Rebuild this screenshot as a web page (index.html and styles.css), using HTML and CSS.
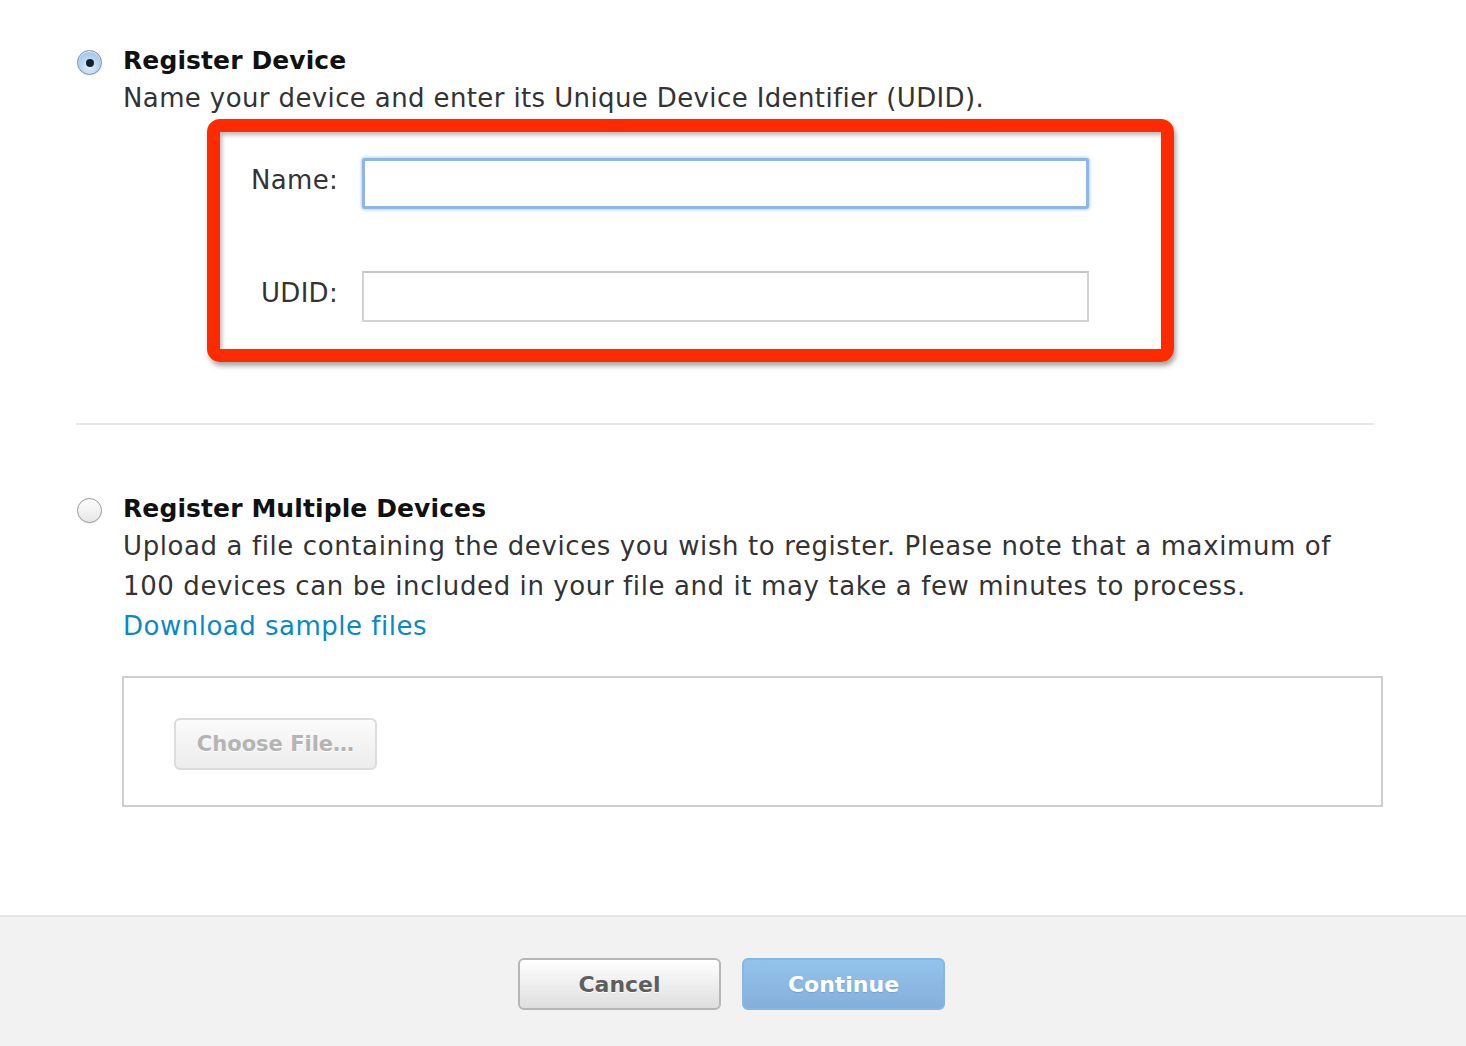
FILE: index.html
```html
<!DOCTYPE html>
<html lang="en">
<head>
<meta charset="utf-8">
<title>Register Device</title>
<link rel="stylesheet" href="styles.css">
</head>
<body>
<div class="page">
  <main class="content">
    <section class="option option-single">
      <span class="radio radio-on"></span>
      <div class="option-body">
        <h2 class="option-title">Register Device</h2>
        <p class="option-desc">Name your device and enter its Unique Device Identifier (UDID).</p>
        <div class="highlight">
          <div class="fields">
            <label class="field-label" for="name">Name:</label>
            <input class="field-input field-focus" id="name" type="text">
            <label class="field-label" for="udid">UDID:</label>
            <input class="field-input" id="udid" type="text">
          </div>
        </div>
      </div>
    </section>

    <hr class="divider">

    <section class="option option-multi">
      <span class="radio"></span>
      <div class="option-body">
        <h2 class="option-title">Register Multiple Devices</h2>
        <p class="option-desc option-desc-wrap">Upload a file containing the devices you wish to register. Please note that a maximum of 100 devices can be included in your file and it may take a few minutes to process.</p>
        <a class="sample-link" href="#">Download sample files</a>
        <div class="file-box">
          <button class="btn btn-file" type="button">Choose File…</button>
        </div>
      </div>
    </section>
  </main>
  <footer class="footer">
    <button class="btn btn-cancel" type="button">Cancel</button>
    <button class="btn btn-continue" type="button">Continue</button>
  </footer>
</div>
</body>
</html>
```

FILE: styles.css
```css
* { box-sizing: border-box; }

html, body {
  margin: 0;
  padding: 0;
  background: #ffffff;
  font-family: "DejaVu Sans", "Liberation Sans", sans-serif;
}

.page {
  height: 1046px;
  display: flex;
  flex-direction: column;
  overflow: hidden;
}

.content {
  flex: 1;
  padding: 43px 0 0 77px;
}

.option {
  display: grid;
  grid-template-columns: 25px 1260px;
  column-gap: 21px;
  align-items: start;
}

.radio {
  display: block;
  width: 25px;
  height: 25px;
  margin-top: 7px;
  border-radius: 50%;
  border: 1px solid #9a9a9a;
  background: linear-gradient(#ffffff, #e6e6e6);
  box-shadow: inset 0 1px 1px rgba(255,255,255,0.9), 0 1px 1px rgba(0,0,0,0.08);
  position: relative;
}

.radio-on {
  border-color: #7f93ab;
  background: radial-gradient(circle at 50% 70%, #e3effb 0%, #b9d5f1 45%, #8fb8e4 100%);
}

.radio-on::after {
  content: "";
  position: absolute;
  left: 50%;
  top: 50%;
  width: 8px;
  height: 8px;
  margin: -4px 0 0 -4px;
  border-radius: 50%;
  background: #16202b;
}

.option-title {
  margin: 0;
  font-size: 25px;
  line-height: 36px;
  font-weight: bold;
  color: #111111;
  letter-spacing: 0.1px;
}

.option-desc {
  margin: 0;
  font-size: 26px;
  line-height: 38px;
  letter-spacing: 0.38px;
  color: #333333;
}

.option-desc-wrap {
  max-width: 1240px;
  letter-spacing: 0.6px;
}

.option-multi .option-title { line-height: 35px; }
.option-multi .option-desc { line-height: 40px; }

.highlight {
  margin: 2px 0 0 84px;
  width: 967px;
  height: 243px;
  border: 13px solid #ff2a00;
  border-radius: 13px;
  box-shadow: 2px 4px 5px rgba(0,0,0,0.35), inset 2px 3px 4px rgba(0,0,0,0.28);
  padding: 26px 0 0 0;
}

.fields {
  display: grid;
  grid-template-columns: 118px 727px;
  column-gap: 24px;
  row-gap: 62px;
  align-items: start;
}

.field-label {
  font-size: 26px;
  line-height: 45px;
  text-align: right;
  color: #333333;
  letter-spacing: 0.3px;
}

.field-input {
  display: block;
  width: 727px;
  height: 51px;
  margin: 0;
  border: 2px solid #d2d2d2;
  border-top-color: #c4c4c4;
  background: #ffffff;
  font: inherit;
  outline: none;
}

.field-focus {
  border: 3px solid #8eb6e0;
  border-radius: 3px;
  box-shadow: 0 0 3px 1px rgba(140,180,225,0.6);
}

.divider {
  margin: 61px 0 0 -1px;
  width: 1298px;
  height: 2px;
  border: 0;
  background: #e6e6e6;
}

.option-multi {
  margin-top: 66px;
}

.sample-link {
  display: block;
  font-size: 26px;
  line-height: 40px;
  letter-spacing: 0.5px;
  color: #0a88c9;
  text-decoration: none;
}

.file-box {
  margin: 30px 0 0 -1px;
  width: 1261px;
  height: 131px;
  border: 2px solid #cfcfcf;
  padding: 40px 0 0 50px;
}

.btn {
  width: 203px;
  height: 52px;
  border-radius: 6px;
  font-family: "DejaVu Sans", "Liberation Sans", sans-serif;
  font-weight: bold;
  font-size: 22px;
  padding: 0;
  cursor: default;
}

.btn-file {
  font-size: 21px;
  color: #b4b4b4;
  border: 2px solid #dcdcdc;
  background: linear-gradient(#fbfbfb, #ececec);
  text-shadow: 0 1px 0 #ffffff;
}

.footer {
  height: 131px;
  flex: none;
  background: #f2f2f2;
  border-top: 2px solid #e6e6e6;
  display: flex;
  justify-content: center;
  align-items: flex-start;
  gap: 21px;
  padding: 41px 3px 0 0;
}

.btn-cancel {
  color: #5e5e5e;
  border: 2px solid #b6b6b6;
  background: linear-gradient(#ffffff, #dedede);
  text-shadow: 0 1px 0 #ffffff;
}

.btn-continue {
  color: #ffffff;
  border: 2px solid #86b7e2;
  background: linear-gradient(#93c3eb, #85afdb);
  text-shadow: 0 1px 1px rgba(60,100,150,0.25);
}
```
